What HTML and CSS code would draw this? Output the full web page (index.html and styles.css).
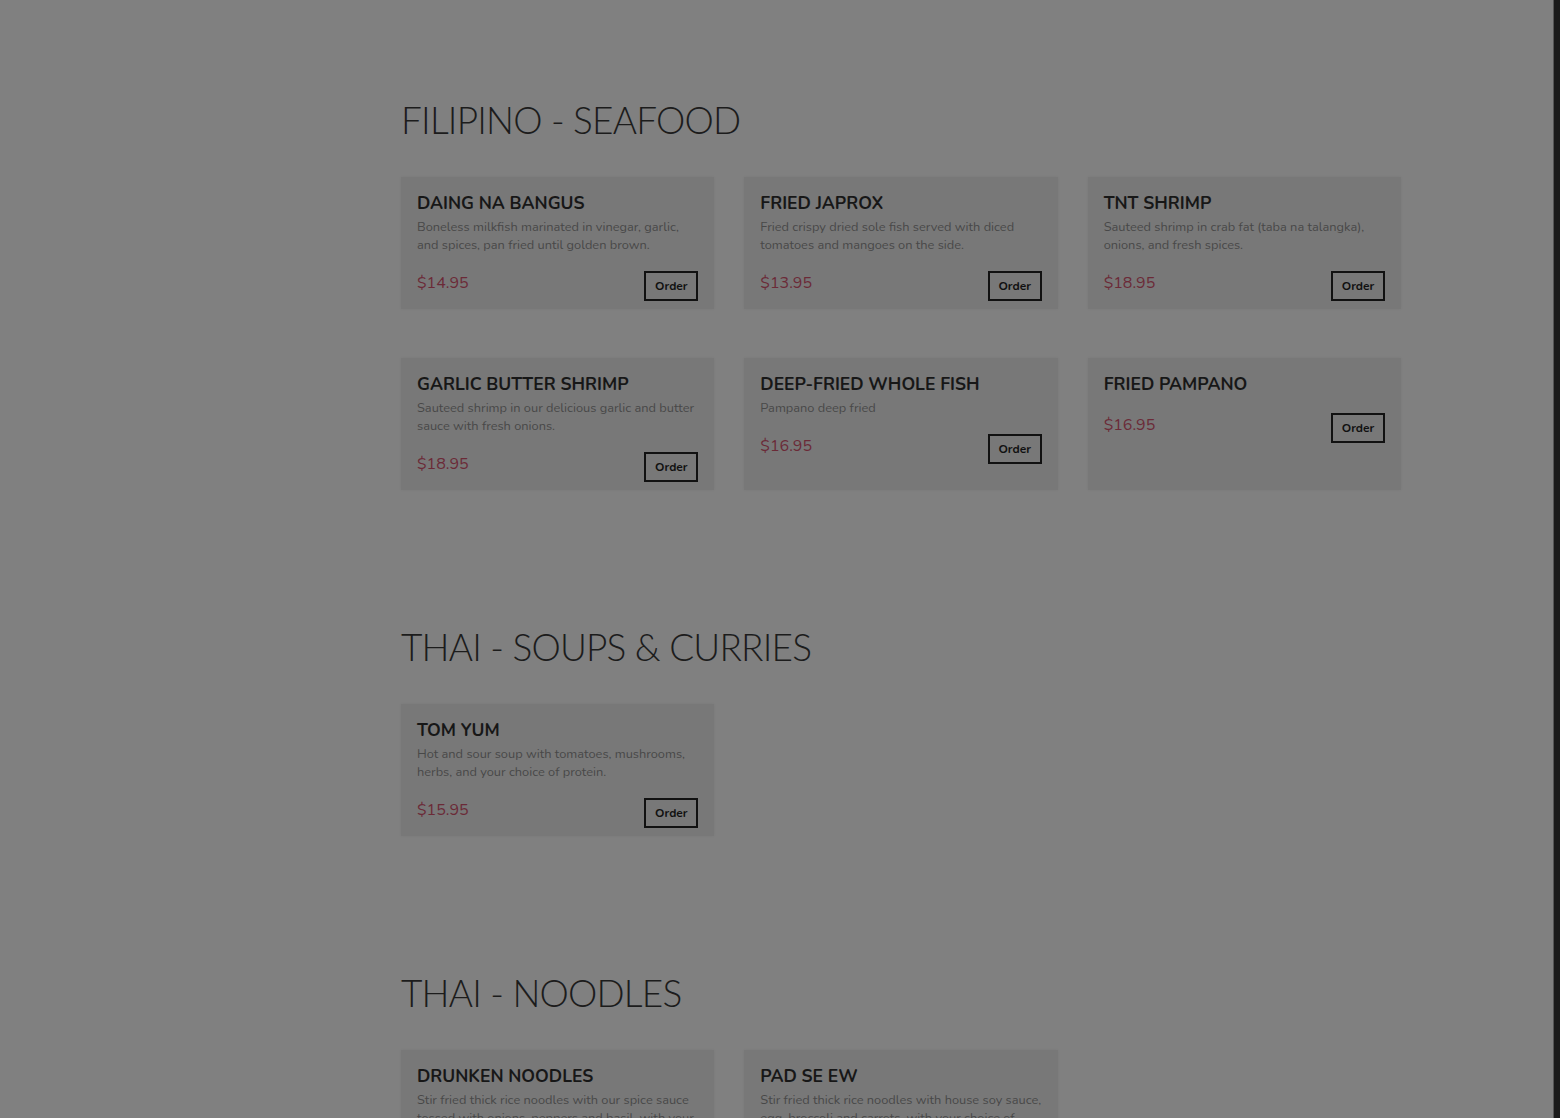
FILE: index.html
```html
<!DOCTYPE html>
<html lang="en">
<head>
    <meta charset="UTF-8">
    <meta name="viewport" content="width=device-width, initial-scale=1.0">
    <title>Menu</title>
    <link rel="stylesheet" href="styles.css">
</head>
<body>
    <main id="menu">

        <!-- Filipino seafood -->
        <section class="menu-section">
            <h2>FILIPINO - SEAFOOD</h2>
            <div class="menu-grid">
                <div class="menu-card">
                    <h3>DAING NA BANGUS</h3>
                    <p class="desc">Boneless milkfish marinated in vinegar, garlic, and spices, pan fried until golden brown.</p>
                    <div class="card-foot">
                        <span class="price">$14.95</span>
                        <button class="order-btn">Order</button>
                    </div>
                </div>
                <div class="menu-card">
                    <h3>FRIED JAPROX</h3>
                    <p class="desc">Fried crispy dried sole fish served with diced tomatoes and mangoes on the side.</p>
                    <div class="card-foot">
                        <span class="price">$13.95</span>
                        <button class="order-btn">Order</button>
                    </div>
                </div>
                <div class="menu-card">
                    <h3>TNT SHRIMP</h3>
                    <p class="desc">Sauteed shrimp in crab fat (taba na talangka), onions, and fresh spices.</p>
                    <div class="card-foot">
                        <span class="price">$18.95</span>
                        <button class="order-btn">Order</button>
                    </div>
                </div>
                <div class="menu-card">
                    <h3>GARLIC BUTTER SHRIMP</h3>
                    <p class="desc">Sauteed shrimp in our delicious garlic and butter sauce with fresh onions.</p>
                    <div class="card-foot">
                        <span class="price">$18.95</span>
                        <button class="order-btn">Order</button>
                    </div>
                </div>
                <div class="menu-card">
                    <h3>DEEP-FRIED WHOLE FISH</h3>
                    <p class="desc">Pampano deep fried</p>
                    <div class="card-foot">
                        <span class="price">$16.95</span>
                        <button class="order-btn">Order</button>
                    </div>
                </div>
                <div class="menu-card">
                    <h3>FRIED PAMPANO</h3>
                    <div class="card-foot">
                        <span class="price">$16.95</span>
                        <button class="order-btn">Order</button>
                    </div>
                </div>
            </div>
        </section>

        <!-- Thai soups -->
        <section class="menu-section">
            <h2>THAI - SOUPS &amp; CURRIES</h2>
            <div class="menu-grid">
                <div class="menu-card">
                    <h3>TOM YUM</h3>
                    <p class="desc">Hot and sour soup with tomatoes, mushrooms, herbs, and your choice of protein.</p>
                    <div class="card-foot">
                        <span class="price">$15.95</span>
                        <button class="order-btn">Order</button>
                    </div>
                </div>
            </div>
        </section>

        <!-- Thai noodles -->
        <section class="menu-section">
            <h2>THAI - NOODLES</h2>
            <div class="menu-grid">
                <div class="menu-card">
                    <h3>DRUNKEN NOODLES</h3>
                    <p class="desc">Stir fried thick rice noodles with our spice sauce tossed with onions, peppers and basil, with your choice of protein.</p>
                    <div class="card-foot">
                        <span class="price">$15.95</span>
                        <button class="order-btn">Order</button>
                    </div>
                </div>
                <div class="menu-card">
                    <h3>PAD SE EW</h3>
                    <p class="desc">Stir fried thick rice noodles with house soy sauce, egg, broccoli and carrots, with your choice of protein.</p>
                    <div class="card-foot">
                        <span class="price">$15.95</span>
                        <button class="order-btn">Order</button>
                    </div>
                </div>
            </div>
        </section>
    </main>

    <div class="scroll-strip"></div>
</body>
</html>
```

FILE: styles.css
```css
body {
    margin: 0;
    background-color: #808080;
    font-family: "Nunito", "Lato", "Open Sans", sans-serif;
    overflow: hidden;
}

#menu {
    width: 1000px;
    margin-left: 401px;
    padding-top: 95px;
}

.menu-section {
    margin-bottom: 132px;
}

h2 {
    margin: 0 0 32px 0;
    font-family: "Lato", sans-serif;
    font-size: 37px;
    line-height: 50px;
    font-weight: 300;
    letter-spacing: -0.8px;
    color: #1c1c1c;
}

.menu-grid {
    display: grid;
    grid-template-columns: repeat(3, 1fr);
    column-gap: 30px;
    row-gap: 49px;
}

.menu-card {
    background-color: #787878;
    padding: 14px 16px 8px 16px;
    box-shadow: 0 0 3px rgba(0, 0, 0, 0.06);
}

.menu-card h3 {
    margin: 0;
    font-size: 17.5px;
    line-height: 24px;
    font-weight: 700;
    color: #171717;
}

.desc {
    margin: 3px 0 0 0;
    font-size: 12.8px;
    line-height: 18px;
    color: #484848;
}

.card-foot {
    display: flex;
    justify-content: space-between;
    align-items: flex-start;
    margin-top: 17px;
}

.price {
    font-size: 16px;
    line-height: 24px;
    color: #6b2a37;
}

.order-btn {
    width: 54px;
    height: 30px;
    padding: 0;
    border: 2px solid #111;
    background: transparent;
    font-family: inherit;
    font-size: 12px;
    font-weight: 700;
    color: #111;
}

.scroll-strip {
    position: fixed;
    top: 0;
    right: 0;
    bottom: 0;
    width: 6px;
    background-color: #1a1a1a;
    border-left: 1px solid #555;
}
```
